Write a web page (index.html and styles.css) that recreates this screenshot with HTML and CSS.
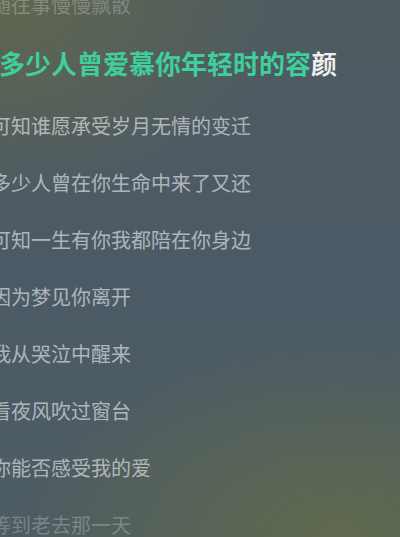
FILE: index.html
```html
<!DOCTYPE html>
<html lang="zh-CN">
<head>
    <meta charset="UTF-8">
    <meta name="viewport" content="width=device-width, initial-scale=1.0">
    <title>歌词</title>
    <link rel="stylesheet" href="styles.css">
</head>
<body>
    <div class="player">
        <ul class="lyrics">
            <li class="line faded">随往事慢慢飘散</li>
            <li class="line current"><span class="sung">多少人曾爱慕你年轻时的容</span>颜</li>
            <li class="line">可知谁愿承受岁月无情的变迁</li>
            <li class="line">多少人曾在你生命中来了又还</li>
            <li class="line">可知一生有你我都陪在你身边</li>
            <li class="line">因为梦见你离开</li>
            <li class="line">我从哭泣中醒来</li>
            <li class="line">看夜风吹过窗台</li>
            <li class="line">你能否感受我的爱</li>
            <li class="line faded">等到老去那一天</li>
        </ul>
    </div>
</body>
</html>
```

FILE: styles.css
```css
body {
    margin: 0;
    font-family: "Noto Sans CJK SC", "Noto Sans", sans-serif;
    background-color: #4c5a66;
}
.player {
    width: 400px;
    height: 537px;
    overflow: hidden;
    background:
        radial-gradient(ellipse 280px 210px at 0% 0%, rgba(96, 104, 78, 0.95), rgba(96, 104, 78, 0) 100%),
        radial-gradient(ellipse 320px 200px at 85% 100%, rgba(98, 108, 76, 0.9), rgba(98, 108, 76, 0) 100%),
        linear-gradient(180deg, #4f5b60 0%, #4c5a66 50%, #4e5c62 100%);
}
.lyrics {
    list-style: none;
    margin: -24px 0 0 -9px;
    padding: 0;
}
.line {
    height: 57px;
    display: flex;
    align-items: center;
    font-size: 20px;
    color: rgba(232, 236, 240, 0.64);
    white-space: nowrap;
}
.line.faded {
    color: rgba(232, 236, 240, 0.28);
}
.line.current {
    height: 64px;
    padding: 0 0 6px 8px;
    box-sizing: border-box;
    font-size: 26px;
    font-weight: bold;
    color: #eef0f2;
}
.sung {
    color: #3fcf9c;
}
```
